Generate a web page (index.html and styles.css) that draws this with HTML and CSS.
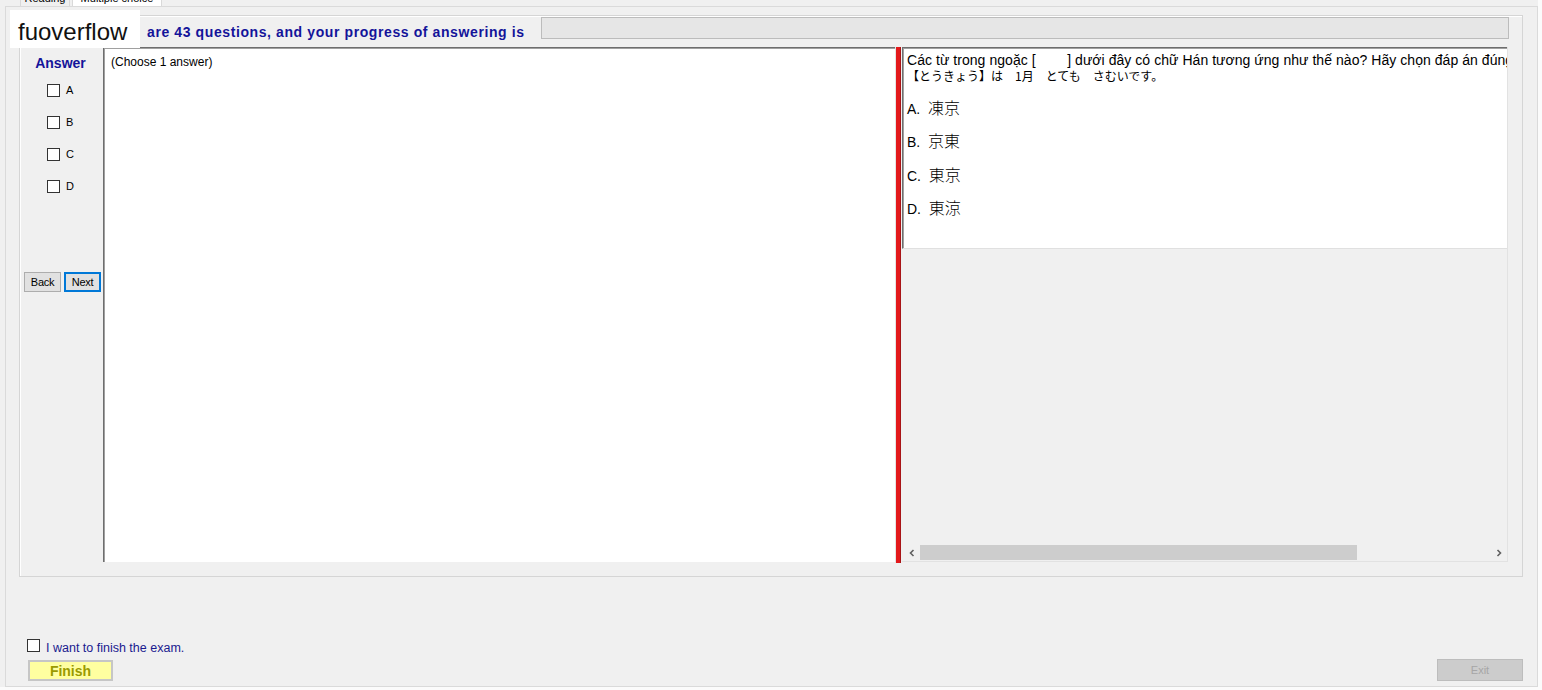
FILE: index.html
```html
<!DOCTYPE html>
<html lang="en">
<head>
    <meta charset="UTF-8">
    <meta name="viewport" content="width=device-width, initial-scale=1.0">
    <title>Exam</title>
    <link rel="stylesheet" href="styles.css">
</head>
<body>
    <div class="window">
        <!-- Tab strip (mostly scrolled off the top) -->
        <div class="tabs">
            <div class="tab">Reading</div>
            <div class="tab tab-active">Multiple choice</div>
        </div>

        <div class="watermark">fuoverflow</div>

        <div class="page">
            <div class="group">
                <div class="header">
                    <span class="summary">are 43 questions, and your progress of answering is</span>
                    <div class="progress"></div>
                </div>

                <div class="main">
                    <!-- Answer column -->
                    <div class="answer-col">
                        <div class="answer-title">Answer</div>
                        <div class="answer-list">
                            <label class="answer-row"><span class="check"></span>A</label>
                            <label class="answer-row"><span class="check"></span>B</label>
                            <label class="answer-row"><span class="check"></span>C</label>
                            <label class="answer-row"><span class="check"></span>D</label>
                        </div>
                        <div class="nav-buttons">
                            <button class="nav-btn">Back</button>
                            <button class="nav-btn nav-btn-focus">Next</button>
                        </div>
                    </div>

                    <div class="choose-box">(Choose 1 answer)</div>

                    <div class="splitter"></div>

                    <!-- Question panel -->
                    <div class="question-panel">
                        <div class="question-box">
                            <div class="question-line">Các từ trong ngoặc [&nbsp;&nbsp;&nbsp;&nbsp;&nbsp;&nbsp;&nbsp;&nbsp;] dưới đây có chữ Hán tương ứng như thế nào? Hãy chọn đáp án đúng</div>
                            <div class="question-line question-jp">【とうきょう】は　1月　とても　さむいです。</div>
                            <div class="options">
                                <div class="option">A.&nbsp;&nbsp;<span class="kanji">凍京</span></div>
                                <div class="option">B.&nbsp;&nbsp;<span class="kanji">京東</span></div>
                                <div class="option">C.&nbsp;&nbsp;<span class="kanji">東京</span></div>
                                <div class="option">D.&nbsp;&nbsp;<span class="kanji">東涼</span></div>
                            </div>
                        </div>
                        <div class="hscroll">
                            <span class="arrow">
                                <svg width="8" height="8" viewBox="0 0 8 8"><path d="M5.5 1 L2.5 4 L5.5 7" fill="none" stroke="#606060" stroke-width="1.6"/></svg>
                            </span>
                            <div class="track"><div class="thumb"></div></div>
                            <span class="arrow">
                                <svg width="8" height="8" viewBox="0 0 8 8"><path d="M2.5 1 L5.5 4 L2.5 7" fill="none" stroke="#606060" stroke-width="1.6"/></svg>
                            </span>
                        </div>
                    </div>
                </div>
            </div>

            <div class="footer">
                <div class="finish-col">
                    <label class="finish-check"><span class="check"></span><span class="finish-text">I want to finish the exam.</span></label>
                    <button class="finish-btn">Finish</button>
                </div>
                <button class="exit-btn">Exit</button>
            </div>
        </div>
    </div>
</body>
</html>
```

FILE: styles.css
```css
* {
    box-sizing: border-box;
}

body {
    margin: 0;
    background: #fbfbfb;
    font-family: 'Liberation Sans', Arial, sans-serif;
    font-size: 12px;
    color: #000;
}

.window {
    position: relative;
    width: 1538px;
    height: 687px;
    background: #f0f0f0;
}

/* Tabs */
.tabs {
    height: 6px;
    overflow: hidden;
    display: flex;
    align-items: flex-end;
    padding-left: 20px;
    gap: 2px;
}

.tab {
    height: 20px;
    width: 50px;
    border: 1px solid #d9d9d9;
    border-bottom: none;
    font-size: 11px;
    line-height: 14px;
    padding-top: 4px;
    text-align: center;
    background: #f0f0f0;
}

.tab-active {
    width: 90px;
    background: #fff;
}

.watermark {
    position: absolute;
    left: 10px;
    top: 10px;
    width: 130px;
    height: 38px;
    background: #fff;
    font-size: 24px;
    line-height: 44px;
    padding-left: 8px;
    color: #111;
}

/* Tab page */
.page {
    margin-left: 5px;
    height: 681px;
    border: 1px solid #dadada;
    padding: 8px 14px 5px 13px;
    display: flex;
    flex-direction: column;
}

.group {
    height: 562px;
    border: 1px solid #d5d5d5;
    box-shadow: inset 1px 1px 0 #fff;
    padding: 1px 0 0 2px;
}

.header {
    height: 22px;
    display: flex;
    align-items: flex-start;
    padding-right: 13px;
}

.summary {
    margin-top: 7px;
    margin-left: 125px;
    color: #14149a;
    font-weight: bold;
    font-size: 14px;
    letter-spacing: 0.6px;
    line-height: 16px;
    white-space: nowrap;
}

.progress {
    flex: 1;
    height: 22px;
    margin-left: 16px;
    background: #e6e6e6;
    border: 1px solid #bcbcbc;
}

.main {
    margin-top: 8px;
    height: 516px;
    display: flex;
}

/* Answer column */
.answer-col {
    width: 81px;
    padding-top: 8px;
}

.answer-title {
    color: #14149a;
    font-weight: bold;
    font-size: 14px;
    line-height: 16px;
    text-align: center;
    padding-right: 4px;
}

.answer-list {
    margin-top: 3px;
}

.answer-row {
    height: 32px;
    display: flex;
    align-items: center;
    padding-left: 25px;
    font-size: 11px;
    gap: 6px;
}

.check {
    display: inline-block;
    width: 13px;
    height: 13px;
    border: 1px solid #333;
    background: #fff;
    flex: none;
}

.nav-buttons {
    margin-top: 70px;
    padding-left: 2px;
    display: flex;
    gap: 3px;
}

.nav-btn {
    width: 37px;
    height: 20px;
    padding: 0;
    font-family: 'Liberation Sans', Arial, sans-serif;
    font-size: 11px;
    letter-spacing: -0.3px;
    background: #e1e1e1;
    border: 1px solid #adadad;
    color: #000;
}

.nav-btn-focus {
    border: 2px solid #0078d7;
}

.choose-box {
    width: 792px;
    height: 515px;
    background: #fff;
    border-top: 1px solid #6e6e6e;
    border-left: 1px solid #6e6e6e;
    box-shadow: inset 1px 1px 0 #a0a0a0;
    padding: 7px 0 0 7px;
    font-size: 12px;
    line-height: 14px;
}

.splitter {
    width: 7px;
    height: 516px;
    background: linear-gradient(to right, #e4e4e4 0 1px, #e3191c 1px 5px, #a81416 5px 6px, #f0f0f0 6px);
}

/* Question panel */
.question-panel {
    width: 606px;
    height: 515px;
    display: flex;
    flex-direction: column;
    justify-content: space-between;
    border-right: 1px solid #e2e2e2;
    border-bottom: 1px solid #e2e2e2;
}

.question-box {
    height: 202px;
    background: #fff;
    border-top: 1px solid #6e6e6e;
    border-left: 1px solid #6e6e6e;
    border-bottom: 1px solid #e0e0e0;
    box-shadow: inset 1px 1px 0 #a0a0a0;
    padding: 5px 0 0 4px;
    overflow: hidden;
    white-space: nowrap;
}

.question-line {
    font-size: 14px;
    line-height: 15px;
    letter-spacing: 0.05px;
}

.question-jp {
    font-family: 'Noto Sans CJK JP', 'Liberation Sans', sans-serif;
    font-size: 12px;
    letter-spacing: 0;
    color: #000;
}

.options {
    margin-top: 8px;
}

.option {
    font-size: 14px;
    line-height: 33px;
    height: 33.3px;
}

.kanji {
    font-family: 'Noto Sans CJK JP', sans-serif;
    font-size: 16px;
    font-weight: 300;
}

.hscroll {
    height: 17px;
    margin-left: 2px;
    display: flex;
    align-items: center;
    background: #f0f0f0;
}

.arrow {
    width: 16px;
    height: 17px;
    display: flex;
    align-items: center;
    justify-content: center;
}

.track {
    flex: 1;
    height: 15px;
}

.thumb {
    width: 437px;
    height: 15px;
    background: #cdcdcd;
}

/* Footer */
.footer {
    margin-top: auto;
    display: flex;
    justify-content: space-between;
    align-items: flex-end;
}

.finish-col {
    display: flex;
    flex-direction: column;
    align-items: flex-start;
}

.finish-check {
    margin-left: 8px;
    display: flex;
    align-items: flex-start;
    gap: 6px;
    color: #1a1a8f;
    font-size: 12.5px;
    line-height: 14px;
}

.finish-text {
    padding-top: 2px;
}

.finish-btn {
    margin-top: 5px;
    margin-left: 9px;
    width: 85px;
    height: 21px;
    padding: 0;
    background: #ffffa0;
    border: 2px solid #c6c6c6;
    color: #9a9a00;
    font-family: 'Liberation Sans', Arial, sans-serif;
    font-weight: bold;
    font-size: 14px;
}

.exit-btn {
    width: 86px;
    height: 22px;
    padding: 0;
    background: #cccccc;
    border: 1px solid #bdbdbd;
    color: #a6a6a6;
    font-family: 'Liberation Sans', Arial, sans-serif;
    font-size: 11px;
}
```
